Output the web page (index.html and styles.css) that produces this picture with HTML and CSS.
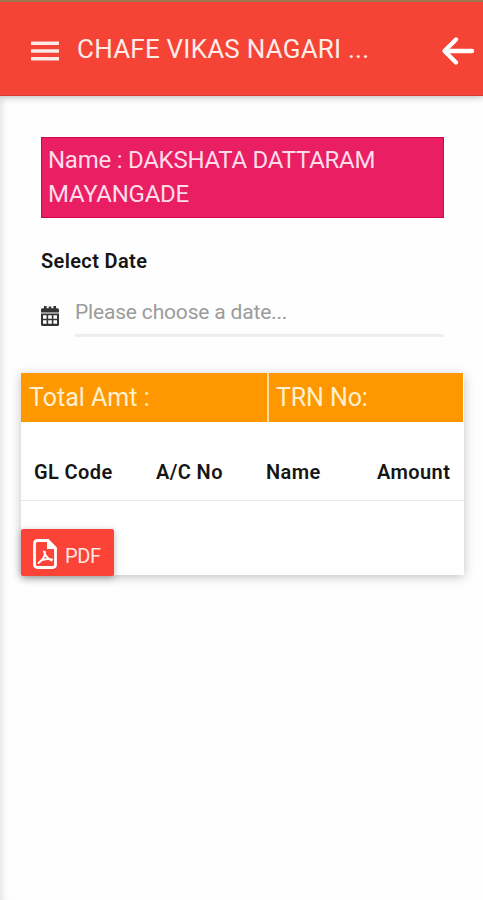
FILE: index.html
```html
<!DOCTYPE html>
<html lang="en">
<head>
<meta charset="utf-8">
<title>Collection Report</title>
<link rel="stylesheet" href="styles.css">
</head>
<body>
<header class="bar">
  <svg class="menu" viewBox="0 0 28 20"><path d="M0 2.3h28M0 10h28M0 17.7h28"/></svg>
  <h1 class="title"><span>CHAFE VIKAS NAGARI ...</span></h1>
  <svg class="back" viewBox="0 0 34 30"><path d="M31 15H4M15 3.5L3.5 15L15 26.5"/></svg>
</header>
<main class="page">
  <section class="form">
    <div class="member"><span>Name : DAKSHATA DATTARAM</span> <span>MAYANGADE</span></div>
    <div class="label"><span>Select Date</span></div>
    <div class="date">
      <svg class="calendar" viewBox="0 0 18 20">
        <path fill="#333" fill-rule="evenodd" d="M3 0h2.6v2.2h2.1V.4h2.6v1.8h2.1V0H15v2.2h1.5Q18 2.2 18 3.7V6.4H0V3.7Q0 2.2 1.5 2.2H3zM0 7.6h18v10.9q0 1.5-1.5 1.5h-15Q0 20 0 18.500zM2 9.300v3.400h3.600V9.300zm5.200 0v3.400h3.600V9.300zm5.200 0v3.400H16V9.300zM2 14.300v3.400h3.600v-3.400zm5.200 0v3.400h3.600v-3.400zm5.200 0v3.400H16v-3.400z"/>
      </svg>
      <div class="field"><span>Please choose a date...</span></div>
    </div>
  </section>
  <section class="card">
    <div class="totals">
      <div class="total"><span>Total Amt :</span></div>
      <div class="trn"><span>TRN No:</span></div>
    </div>
    <div class="columns">
      <span>GL Code</span><span>A/C No</span><span>Name</span><span>Amount</span>
    </div>
    <button class="pdf">
      <svg class="file" viewBox="0 0 24 30">
        <path class="sheet" d="M4.500 1.500H15L22.500 9V25.500Q22.500 28.500 19.500 28.500H4.500Q1.500 28.500 1.500 25.500V4.500Q1.500 1.500 4.500 1.500Z"/>
        <path class="fold" d="M14 1.500V10H22.500L15 1.500Z"/>
        <path class="mark" d="M11 12.500Q12.500 18 18.500 21.500M12 13Q12 19.500 5.500 24M7.500 21.700Q13 19 19 20.500"/>
      </svg>
      <span class="caption">PDF</span>
    </button>
  </section>
</main>
</body>
</html>
```

FILE: styles.css
```css
* { box-sizing: border-box; }
body {
  margin: 0;
  height: 900px;
  overflow: hidden;
  background: #fefefe;
  font-family: Roboto, sans-serif;
  display: flex;
  flex-direction: column;
}
span { white-space: nowrap; }
.bar {
  position: relative;
  height: 96px;
  flex: none;
  display: flex;
  align-items: center;
  padding: 5px 8px 0 31px;
  background: #f54336;
  border-top: 2px solid #a07552;
  border-bottom: 1px solid #d53b2e;
  box-shadow: 0 1px 7px rgba(0, 0, 0, .28);
}
.menu { width: 28px; height: 20px; flex: none; fill: none; stroke: #ffe9e5; stroke-width: 3.6; }
.title {
  flex: 1;
  margin: -5px 0 0 18px;
  font-size: 26px;
  font-weight: 400;
  letter-spacing: .22px;
  line-height: 32px;
  color: #ffebe8;
}
.back { width: 34px; height: 30px; flex: none; fill: none; stroke: #fff; stroke-width: 4.4; stroke-linecap: round; stroke-linejoin: round; }
.page {
  flex: 1;
  padding: 41px 20px 0 21px;
  box-shadow: inset 7px 0 7px -5px rgba(0, 0, 0, .12);
}
.form { padding: 0 19px 0 20px; }
.member {
  height: 81px;
  padding: 5px 6px 0;
  border: 1px solid #cf084e;
  background: #e91e63;
  color: #ffdce9;
  font-size: 24px;
  letter-spacing: -.25px;
  line-height: 34px;
}
.member span { display: block; }
.label { margin-top: 31px; font-size: 20px; font-weight: 600; letter-spacing: .36px; line-height: 24px; color: #151515; }
.date { display: flex; align-items: flex-end; margin-top: 24px; height: 40px; }
.calendar { width: 18px; height: 20px; margin: 0 16px 11px 0; flex: none; }
.field {
  flex: 1;
  height: 40px;
  padding-top: 2px;
  border-bottom: 3px solid #eee;
  color: #9b9b9b;
  font-size: 21px;
  letter-spacing: -.18px;
  line-height: 26px;
}
.card {
  margin-top: 36px;
  width: 443px;
  height: 202px;
  background: #fff;
  box-shadow: 0 2px 10px rgba(0, 0, 0, .24);
}
.totals { display: flex; height: 49px; padding-right: 1px; color: #fff0d0; font-size: 25px; line-height: 49px; }
.total { width: 246px; padding-left: 8px; background: #ff9800; }
.trn { flex: 1; padding-left: 8px; background: #ff9800; border-left: 2px solid #ffd9a3; letter-spacing: -.1px; }
.trn { padding-left: 7px; }
.columns {
  display: grid;
  grid-template-columns: 122px 110px 111px 1fr;
  height: 79px;
  padding: 38px 0 0 13px;
  border-bottom: 1px solid #e9e9e9;
  color: #151515;
  font-size: 20px;
  font-weight: 600;
  letter-spacing: .4px;
  line-height: 24px;
}
.pdf {
  display: flex;
  align-items: center;
  width: 93px;
  height: 47px;
  margin: 28px 0 0;
  padding: 2px 0 0 12px;
  border: 0;
  border-radius: 2px;
  background: #fb4337;
  box-shadow: 0 2px 7px rgba(0, 0, 0, .3);
  color: #ffe6e2;
  font: 400 20px/24px Roboto, sans-serif;
  letter-spacing: -.4px;
}
.file { width: 24px; height: 30px; flex: none; margin-right: 8px; fill: none; stroke: #fff; }
.sheet { stroke-width: 2.8; }
.fold { fill: #fff; stroke: none; }
.mark { stroke-width: 1.9; stroke-linecap: round; }
.caption { padding-top: 5px; }
```
